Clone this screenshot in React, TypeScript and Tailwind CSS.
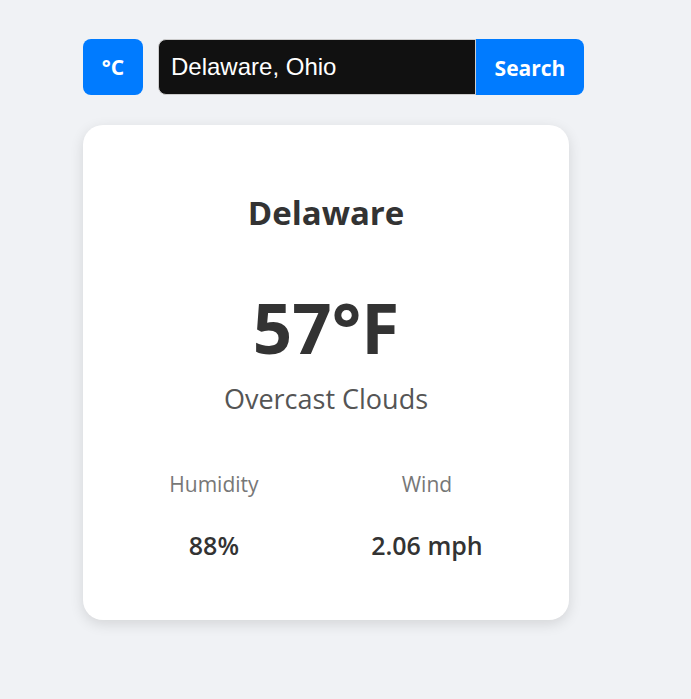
import * as React from "react";

const font = { fontFamily: '"Segoe UI", "Open Sans", "Noto Sans", sans-serif' };

function Stat({ label, value }: { label: string; value: string }) {
  return (
    <div className="flex flex-col items-center">
      <span className="text-[21px] leading-[28px] text-[#777]">{label}</span>
      <span className="mt-[32px] text-[25px] leading-[30px] font-semibold text-[#333]">{value}</span>
    </div>
  );
}

export default function App() {
  return (
    <div className="min-h-[699px] bg-[#f0f2f5] pl-[83px] pt-[39px]" style={font}>
      {/* Верхняя панель: единицы и поиск */}
      <div className="flex items-center gap-[15px]">
        <button className="h-[56px] w-[60px] rounded-[8px] bg-[#007bff] pt-[2px] text-[21px] font-bold text-white">
          °C
        </button>
        <div className="flex h-[56px]">
          <input
            defaultValue="Delaware, Ohio"
            className="h-full w-[318px] rounded-l-[8px] border border-[#ccc] bg-[#111] px-[12px] text-[24px] text-white outline-none"
            style={{ fontFamily: '"Liberation Sans", Arial, sans-serif' }}
          />
          <button className="h-full w-[108px] rounded-r-[8px] bg-[#007bff] pt-[3px] text-[21px] font-bold text-white">
            Search
          </button>
        </div>
      </div>

      {/* Карточка погоды */}
      <div className="mt-[30px] flex w-[486px] flex-col items-center rounded-[20px] bg-white px-[30px] pt-[66px] pb-[60px] shadow-[0_4px_14px_rgba(0,0,0,0.12)]">
        <h2 className="text-[33px] leading-[44px] font-bold text-[#333]">Delaware</h2>
        <div className="mt-[50px] text-[69px] leading-[84px] font-bold text-[#333]">57°F</div>
        <p className="mt-[13px] text-[27px] leading-[34px] text-[#555]">Overcast Clouds</p>
        <div className="mt-[54px] flex w-full justify-around">
          <Stat label="Humidity" value="88%" />
          <Stat label="Wind" value="2.06 mph" />
        </div>
      </div>
    </div>
  );
}
